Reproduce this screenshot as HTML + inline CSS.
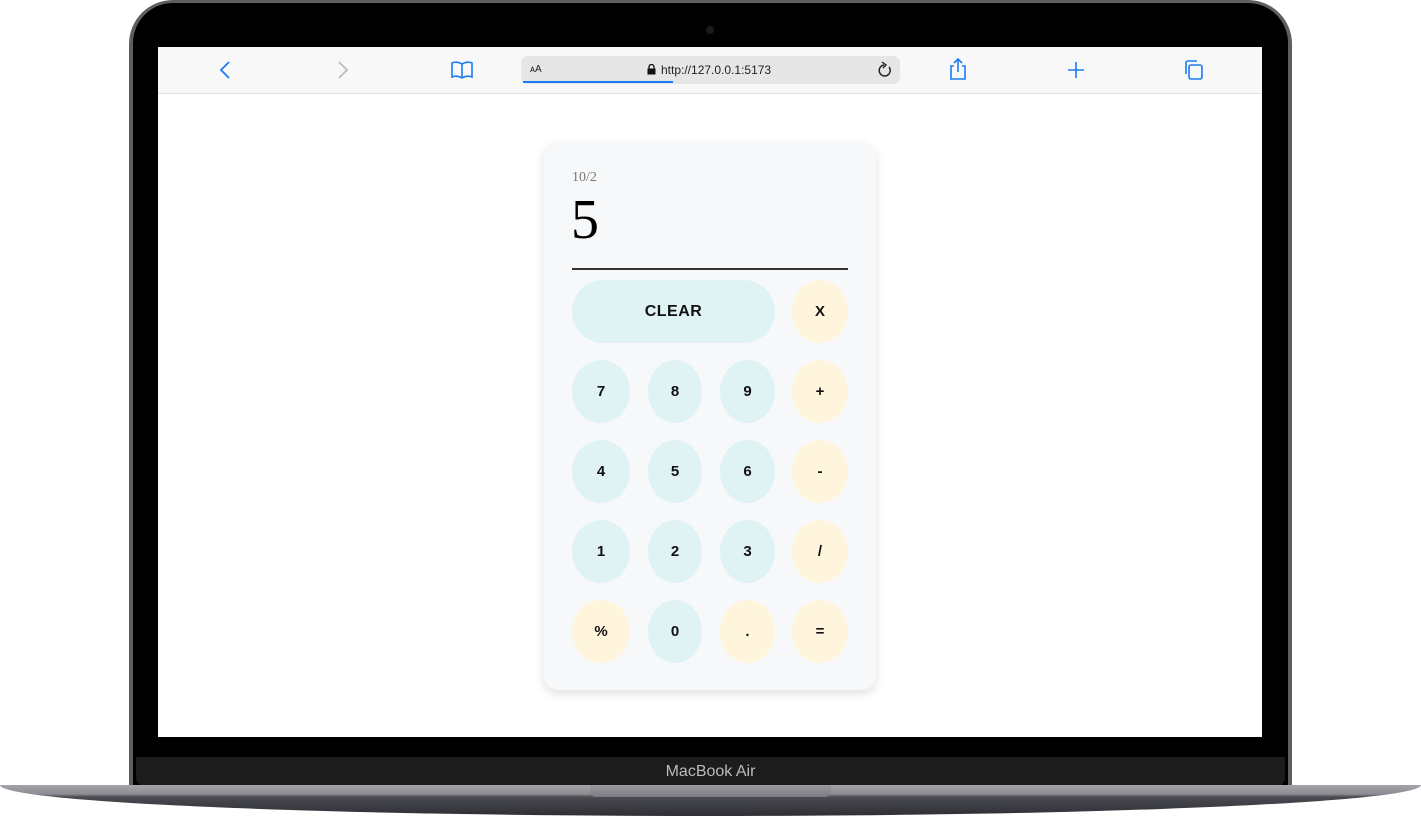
<!DOCTYPE html>
<html><head><meta charset="utf-8"><style>
*{margin:0;padding:0;box-sizing:border-box}
body{width:1421px;height:816px;background:#fff;position:relative;overflow:hidden;font-family:"Liberation Sans",sans-serif}
.frame{position:absolute;left:129px;top:0;width:1163px;height:790px;border-radius:44px 44px 0 0;background:#5d5e62;}
.inner{position:absolute;left:133px;top:3px;width:1155px;height:787px;border-radius:40px 40px 0 0;background:#000}
.chin{position:absolute;left:136px;top:757px;width:1149px;height:30px;background:#1c1c1d;border-radius:0 0 10px 10px;color:#bbb;font-size:16px;text-align:center;line-height:30px}
.cam{position:absolute;left:706px;top:26px;width:8px;height:8px;border-radius:50%;background:#1a1a1a}
.screen{position:absolute;left:158px;top:47px;width:1104px;height:690px;background:#fff}
.bar{position:absolute;left:0;top:0;width:1104px;height:47px;background:#f8f8f8;border-bottom:1px solid #e2e2e2}
.url{position:absolute;left:363px;top:9px;width:379px;height:28px;background:#e6e6e6;border-radius:7px;font-size:12px;color:#222}
.base{position:absolute;left:0;top:785px;width:1421px;height:31px;background:linear-gradient(#a4a5aa 0,#8c8d92 9px,#4a4b50 12px,#2e2f35 31px);border-radius:0 0 50% 50%/0 0 100% 100%}
.notch{position:absolute;left:590px;top:785px;width:241px;height:12px;background:linear-gradient(#9a9ba0,#7a7b80);border-radius:0 0 6px 6px}
.card{position:absolute;left:386px;top:95px;width:332px;height:548px;background:#f6f8fa;border-radius:14px;box-shadow:0 4px 10px rgba(0,0,0,.12)}
.expr{position:absolute;left:28px;top:28px;font-family:"Liberation Serif",serif;font-size:14px;color:#777}
.res{position:absolute;left:27px;top:46px;font-family:"Liberation Serif",serif;font-size:56px;color:#000}
.line{position:absolute;left:28px;top:126px;width:276px;height:1.5px;background:#333}
.b{position:absolute;height:63px;border-radius:50%;display:flex;align-items:center;justify-content:center;font-weight:bold;font-size:15px;color:#111}
.n{background:#dff2f4}.o{background:#fff5dc}
</style></head><body>
<div class="frame"></div><div class="inner"></div><div class="cam"></div>
<div class="chin">MacBook Air</div>
<div class="base"></div><div class="notch"></div>
<div class="screen">
<div class="bar">
<svg style="position:absolute;left:60px;top:13px" width="14" height="20"><path d="M11 2 L3 10 L11 18" fill="none" stroke="#1a7cf5" stroke-width="1.8"/></svg>
<svg style="position:absolute;left:178px;top:13px" width="14" height="20"><path d="M3 2 L11 10 L3 18" fill="none" stroke="#bbb" stroke-width="1.8"/></svg>
<svg style="position:absolute;left:292px;top:13px" width="24" height="20"><path d="M2 3 Q7 1 12 4 Q17 1 22 3 V17 Q17 15 12 18 Q7 15 2 17 Z M12 4 V18" fill="none" stroke="#1a7cf5" stroke-width="1.6"/></svg>
<div class="url"><span style="position:absolute;left:9px;top:8px;font-size:10px">ᴀA</span>
<svg style="position:absolute;left:126px;top:8px" width="9" height="11"><rect x="0.5" y="4.5" width="8" height="6" fill="#111"/><path d="M2 5 V3 A2.5 2.5 0 0 1 7 3 V5" fill="none" stroke="#111" stroke-width="1.3"/></svg>
<span style="position:absolute;left:140px;top:7px">http://127.0.0.1:5173</span>
<svg style="position:absolute;left:356px;top:5px" width="16" height="18"><path d="M12 6 A5.5 5.5 0 1 1 7 4" fill="none" stroke="#222" stroke-width="1.5"/><path d="M5 1 L9 4 L6 7" fill="none" stroke="#222" stroke-width="1.4"/></svg>
<div style="position:absolute;left:2px;top:25px;width:150px;height:2px;background:#1a7cf5"></div></div>
<svg style="position:absolute;left:790px;top:10px" width="20" height="24"><path d="M6 9 H3 V22 H17 V9 H14 M10 2 V15 M6 6 L10 2 L14 6" fill="none" stroke="#1a7cf5" stroke-width="1.6"/></svg>
<svg style="position:absolute;left:908px;top:13px" width="20" height="20"><path d="M10 2 V18 M2 10 H18" stroke="#1a7cf5" stroke-width="1.6"/></svg>
<svg style="position:absolute;left:1025px;top:12px" width="22" height="22"><rect x="6" y="6" width="13" height="14" rx="2" fill="none" stroke="#1a7cf5" stroke-width="1.6"/><path d="M3 15 V4 A2 2 0 0 1 5 2 H14" fill="none" stroke="#1a7cf5" stroke-width="1.6"/></svg>
</div>
<div class="card">
<div class="expr">10/2</div><div class="res">5</div><div class="line"></div>
<div class="b n" style="left:28px;top:138px;width:203px;border-radius:32px;font-size:16px;letter-spacing:.5px">CLEAR</div>
<div class="b o" style="left:248px;top:138px;width:56px">X</div>
<div class="b n" style="left:28px;top:218px;width:58px">7</div><div class="b n" style="left:104px;top:218px;width:54px">8</div><div class="b n" style="left:176px;top:218px;width:55px">9</div><div class="b o" style="left:248px;top:218px;width:56px">+</div>
<div class="b n" style="left:28px;top:298px;width:58px">4</div><div class="b n" style="left:104px;top:298px;width:54px">5</div><div class="b n" style="left:176px;top:298px;width:55px">6</div><div class="b o" style="left:248px;top:298px;width:56px">-</div>
<div class="b n" style="left:28px;top:378px;width:58px">1</div><div class="b n" style="left:104px;top:378px;width:54px">2</div><div class="b n" style="left:176px;top:378px;width:55px">3</div><div class="b o" style="left:248px;top:378px;width:56px">/</div>
<div class="b o" style="left:28px;top:458px;width:58px">%</div><div class="b n" style="left:104px;top:458px;width:54px">0</div><div class="b o" style="left:176px;top:458px;width:55px">.</div><div class="b o" style="left:248px;top:458px;width:56px">=</div>
</div>
</div>
</body></html>
